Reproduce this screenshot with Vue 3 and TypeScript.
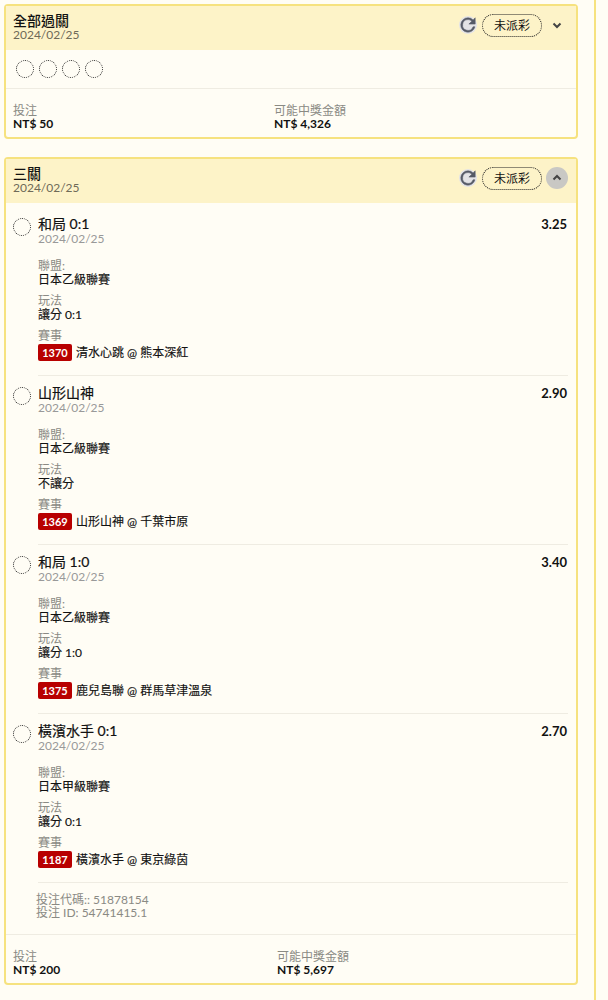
<script setup lang="ts">
interface Leg {
  pick: string;
  odds: string;
  league: string;
  play: string;
  code: string;
  match: string;
}

const DATE = '2024/02/25';

const legs: Leg[] = [
  { pick: '和局 0:1', odds: '3.25', league: '日本乙級聯賽', play: '讓分 0:1', code: '1370', match: '清水心跳 @ 熊本深紅' },
  { pick: '山形山神', odds: '2.90', league: '日本乙級聯賽', play: '不讓分', code: '1369', match: '山形山神 @ 千葉市原' },
  { pick: '和局 1:0', odds: '3.40', league: '日本乙級聯賽', play: '讓分 1:0', code: '1375', match: '鹿兒島聯 @ 群馬草津溫泉' },
  { pick: '橫濱水手 0:1', odds: '2.70', league: '日本甲級聯賽', play: '讓分 0:1', code: '1187', match: '橫濱水手 @ 東京綠茵' },
];
</script>

<template>
  <div class="page">
    <section class="card">
      <header class="head">
        <div class="head-text">
          <div class="title">全部過關</div>
          <div class="date">{{ DATE }}</div>
        </div>
        <div class="head-actions">
          <span class="refresh">
            <svg viewBox="2 2 20 20" width="18" height="18"><path d="M17.65 6.35A7.96 7.96 0 0 0 12 4a8 8 0 1 0 7.73 10h-2.08A6 6 0 1 1 12 6c1.66 0 3.14.69 4.22 1.78L13 11h7V4l-2.35 2.35z" /></svg>
          </span>
          <span class="status">未派彩</span>
          <span class="fold">
            <svg viewBox="0 0 12 12" width="12" height="12"><path d="M2.5 4.5 6 8l3.5-3.5" /></svg>
          </span>
        </div>
      </header>
      <div class="dots">
        <span v-for="n in 4" :key="n" class="dot"></span>
      </div>
      <footer class="foot">
        <div class="foot-col">
          <div class="label">投注</div>
          <div class="money">NT$ 50</div>
        </div>
        <div class="foot-col">
          <div class="label">可能中獎金額</div>
          <div class="money">NT$ 4,326</div>
        </div>
      </footer>
    </section>

    <section class="card">
      <header class="head">
        <div class="head-text">
          <div class="title">三關</div>
          <div class="date">{{ DATE }}</div>
        </div>
        <div class="head-actions">
          <span class="refresh">
            <svg viewBox="2 2 20 20" width="18" height="18"><path d="M17.65 6.35A7.96 7.96 0 0 0 12 4a8 8 0 1 0 7.73 10h-2.08A6 6 0 1 1 12 6c1.66 0 3.14.69 4.22 1.78L13 11h7V4l-2.35 2.35z" /></svg>
          </span>
          <span class="status">未派彩</span>
          <span class="fold open">
            <svg viewBox="0 0 12 12" width="12" height="12"><path d="M2.5 7.5 6 4l3.5 3.5" /></svg>
          </span>
        </div>
      </header>

      <div class="legs">
        <div v-for="leg in legs" :key="leg.code" class="leg">
          <span class="dot"></span>
          <div class="leg-main">
            <div class="leg-top">
              <div class="pick">{{ leg.pick }}</div>
              <div class="odds">{{ leg.odds }}</div>
            </div>
            <div class="date light">{{ DATE }}</div>
            <div class="field">
              <div class="label">聯盟:</div>
              <div class="value">{{ leg.league }}</div>
            </div>
            <div class="field">
              <div class="label">玩法</div>
              <div class="value">{{ leg.play }}</div>
            </div>
            <div class="field">
              <div class="label">賽事</div>
              <div class="value match"><span class="code">{{ leg.code }}</span>{{ leg.match }}</div>
            </div>
          </div>
        </div>
      </div>

      <div class="ids">
        <div>投注代碼:: 51878154</div>
        <div>投注 ID: 54741415.1</div>
      </div>

      <footer class="foot wide">
        <div class="foot-col">
          <div class="label">投注</div>
          <div class="money">NT$ 200</div>
        </div>
        <div class="foot-col">
          <div class="label">可能中獎金額</div>
          <div class="money">NT$ 5,697</div>
        </div>
      </footer>
    </section>
  </div>
</template>

<style>
html, body {
  background: #fffdf5;
}
</style>

<style scoped>
.page {
  box-sizing: border-box;
  width: 596px;
  min-height: 1000px;
  padding: 4px 16px 0 4px;
  border-right: 2px solid #f6e27f;
  display: flex;
  flex-direction: column;
  gap: 18px;
  font-family: Lato, "Noto Sans CJK TC", sans-serif;
  color: #111;
}
.card {
  border: 2px solid #f6e27f;
  border-radius: 4px;
  background: #fffdf5;
}
.head {
  display: flex;
  justify-content: space-between;
  align-items: center;
  height: 44px;
  padding: 0 8px 0 7px;
  background: #fdf3c8;
}
.head-text {
  margin-top: -3px;
}
.title {
  font-size: 14px;
  font-weight: 500;
  line-height: 15px;
}
.date {
  font-size: 12px;
  line-height: 13px;
  color: #6f6a58;
}
.date.light {
  color: #999;
  line-height: 14px;
}
.head-actions {
  display: flex;
  align-items: center;
  margin-top: -6px;
}
.refresh {
  width: 18px;
  height: 18px;
  border-radius: 50%;
  background: #e3e3e6;
  display: flex;
}
.refresh path {
  fill: #555a66;
  stroke: #555a66;
  stroke-width: 0.6;
}
.status {
  box-sizing: border-box;
  width: 60px;
  height: 23px;
  margin-left: 5px;
  border: 1px dotted #222;
  border-radius: 12px;
  font-size: 12px;
  line-height: 21px;
  text-align: center;
}
.fold {
  width: 22px;
  height: 22px;
  margin-left: 4px;
  border-radius: 50%;
  display: flex;
  align-items: center;
  justify-content: center;
}
.fold.open {
  background: #c9c8c4;
}
.fold path {
  fill: none;
  stroke: #444;
  stroke-width: 2;
}
.dots {
  display: flex;
  gap: 5px;
  height: 38px;
  align-items: center;
  padding-left: 10px;
  border-bottom: 1px solid #efece2;
}
.dot {
  flex: none;
  box-sizing: border-box;
  width: 18px;
  height: 18px;
  border: 1px dotted #222;
  border-radius: 50%;
}
.foot {
  display: grid;
  grid-template-columns: 261px 1fr;
  padding: 15px 7px 7px;
}
.foot.wide {
  grid-template-columns: 264px 1fr;
  border-top: 1px solid #efece2;
}
.label {
  font-size: 12px;
  line-height: 13px;
  color: #8a8a84;
}
.money {
  font-size: 12px;
  line-height: 13px;
  font-weight: 700;
}
.legs {
  padding: 4px 8px 0 7px;
}
.leg {
  display: flex;
  gap: 7px;
  padding-top: 9px;
}
.leg .dot {
  margin-top: 2px;
}
.leg-main {
  flex: 1;
  padding-bottom: 14px;
  border-bottom: 1px solid #efece2;
}
.leg-top {
  display: flex;
  justify-content: space-between;
  align-items: center;
}
.pick {
  font-size: 14px;
  line-height: 16px;
  -webkit-text-stroke: 0.2px #111;
}
.odds {
  margin-right: 1px;
  font-size: 13px;
  font-weight: 700;
  line-height: 16px;
}
.field {
  margin-top: 7px;
}
.date + .field {
  margin-top: 13px;
}
.value {
  font-size: 12px;
  line-height: 15px;
  -webkit-text-stroke: 0.15px #111;
}
.match {
  display: flex;
  align-items: center;
  gap: 4px;
  margin-top: 2px;
  line-height: 17px;
}
.code {
  box-sizing: border-box;
  width: 34px;
  height: 17px;
  background: #b80000;
  border-radius: 2px;
  color: #fff;
  font-size: 11px;
  font-weight: 700;
  line-height: 17px;
  text-align: center;
  -webkit-text-stroke: 0;
}
.ids {
  padding: 10px 0 15px 30px;
  font-size: 12px;
  line-height: 13px;
  color: #8a8a84;
}
</style>
